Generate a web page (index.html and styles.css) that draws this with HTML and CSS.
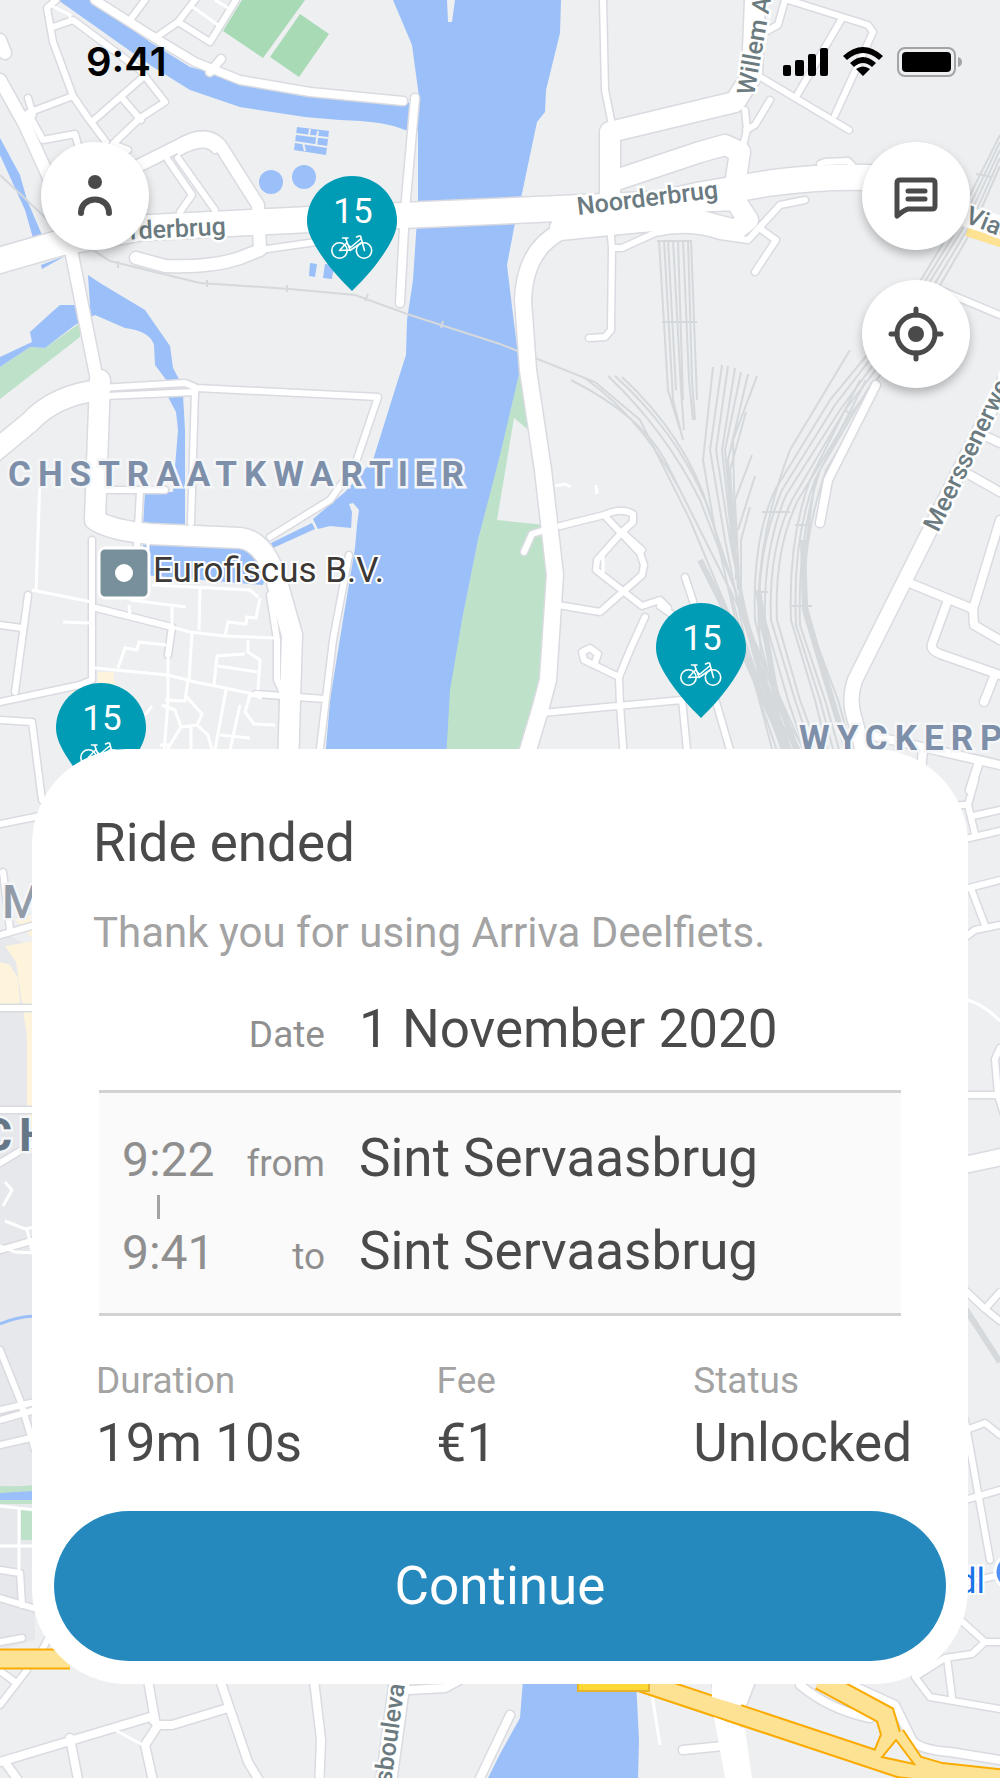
FILE: index.html
```html
<!DOCTYPE html>
<html lang="en">
<head>
<meta charset="utf-8">
<meta name="viewport" content="width=device-width, initial-scale=1">
<title>Ride ended</title>
<link rel="stylesheet" href="styles.css">
</head>
<body>
<div class="screen">
  <svg class="map" viewBox="0 0 1000 1778" preserveAspectRatio="xMidYMin slice" aria-hidden="true">
    <defs>
      <g id="roads">
        <!-- north-west streets -->
        <path class="w6" d="M56 0L47 8L53 42L73 96L88 118L106 142M53 27L73 20L140 70L165 102L140 118L113 144L128 150M73 96L28 113L43 140L75 134L82 160M28 98L33 115M94 120L142 78M122 98L141 120M130 20L145 0M155 38L178 22L210 42L236 0M178 22L195 0"/>
        <path class="w8" d="M95 0L155 38L195 62L240 80L310 92L403 101M415 98L405 210L400 303M210 72L221 59"/>
        <path class="w12" d="M0 40L5 53M0 80L25 125L50 180M70 245L98 385M140 165L180 145Q206 130 220 145L258 205L260 250L240 258Q210 268 165 266L136 258"/>
        <path class="w6" d="M180 152Q205 138 215 150M168 160L192 195L180 212M178 158L215 210M260 250L330 240"/>
        <path class="w26" d="M-10 263L60 243L140 228L300 220L660 204L700 195L770 183Q830 175 880 178"/>
        <!-- north-east streets -->
        <path class="w6" d="M603 0L605 90L612 125M785 0L778 25L765 32M788 0L868 25L873 32L835 115M841 20L796 97M762 78L849 130M770 100L755 125L746 130M820 164L825 162L848 161L852 165M745 110L747 130L742 150M610 225L612 248L611 330L605 337L589 338M612 248L622 248L655 233Q690 225 720 236L748 240L780 205L805 200M762 230L776 240L755 272M940 290L1000 315"/>
        <path class="w20" d="M755 0L752 75L735 102L610 132L610 220M610 182L700 152L725 145L740 152L735 185M690 202L735 200L748 220L735 230L690 218L560 228"/>
        <path class="w16" d="M660 222L560 232Q525 250 523 300L528 370L543 470L555 575L548 680L540 710L525 760"/>
        <path class="w6" d="M560 526L604 515Q622 507 633 514L633 522L622 532L597 560L596 570L642 606L660 600L668 608M604 515L640 553L644 565L642 575L600 612L558 605M622 532L642 550M645 617L630 650L619 677M524 552L532 534L548 529M685 577L693 601L697 620M660 606L680 620M619 677L584 660L582 652L590 648L598 654L594 665M619 677L620 705L624 760M542 713L682 700L688 760M714 695L730 750"/>
        <!-- east streets -->
        <path class="w14" d="M1010 370L925 540L855 680Q848 700 855 720L865 760"/>
        <path class="w8" d="M912 584L973 609L1000 520M948 600L932 644Q930 650 940 654L1000 675M973 609L974 625L1000 640M970 475L1000 492M985 436L1000 443M995 674L984 702M876 385L828 480L820 523M870 735L1000 765M923 750L920 780M978 765L970 790"/>
        <path class="w6" d="M975 780L968 805L975 834M960 805L968 805M973 816L1000 810M965 839L1000 831M965 889L1000 880M972 891L986 928M960 941L975 930L1000 925M965 1095L1000 1095M1000 1048L995 1059L998 1095L1010 1134M965 1290L985 1309L1000 1321M985 1309L1000 1292M965 1420L990 1560M966 1430L985 1423L1000 1435M965 1500L1000 1490M970 1582L1000 1575M955 1615L985 1642L1000 1642M985 1642L972 1654L945 1658L915 1677L930 1697L1000 1709M947 1658L952 1697"/>
        <path class="w16" d="M960 1166L1010 1155"/>
        <!-- west streets -->
        <path class="w20" d="M-10 455L30 422Q55 395 100 390M100 380L95 520Q110 530 150 534L240 538Q262 540 275 575L292 635L290 700L288 770"/>
        <path class="w6" d="M100 388L185 383L197 388L378 397L355 465L330 500L270 537M106 396L195 392L191 523M105 490L165 490M140 492L137 545M92 540L92 680L80 685L0 702M0 625L22 628M28 595L15 692M92 607L172 627L168 655M0 720L32 722L42 800M349 555L333 640L318 765M270 595L277 640L277 680L284 695M256 694L325 699M0 824L40 816M3 872L10 930M0 935L35 925M0 1008L35 1008M0 1110L35 1110M0 1163L35 1142M0 1250L35 1240M0 1350L20 1400L35 1450M0 1410L35 1402M0 1420L35 1410M0 1445L35 1437M0 1570L20 1573L22 1605M0 1598L40 1610M0 1642L22 1638M50 1635L42 1650M0 1671L15 1682M27 1670L0 1705"/>
        <!-- southern streets -->
        <path class="w8" d="M0 1762L150 1717L158 1725L145 1745L155 1790M5 1762L25 1790M70 1738L80 1790M148 1680L155 1720M158 1725L172 1725L228 1708M220 1680L248 1762L265 1790M314 1680L321 1740L319 1790M510 1715L480 1778M683 1750L723 1746M800 1685Q830 1710 870 1718M840 1680L895 1705L912 1740Q920 1750 950 1752L1000 1760M410 1690L445 1688L460 1680"/>
        <path class="w20" d="M400 1680L385 1790M722 1680L740 1790M745 1680L730 1720"/>
      </g>
      <g id="lanes">
        <path d="M32 590L92 602M40 478L36 592M63 622L90 623M129 605L130 617M130 600L186 607M200 588L199 630M172 607V625M172 627L190 632L225 636L275 638M260 598L256 618L247 617L246 624L228 622L225 636M118 668L125 648L137 650L139 642L166 645M168 655V700L162 780M192 632L189 680M95 668L168 675L195 682L225 688L258 695M248 640V652L260 660L258 690M214 685L217 656L245 654M218 666L257 672M165 700L185 701L188 680M185 695L202 714L197 725L181 727L175 710L162 705M181 727L170 745L160 765M191 727V760M197 725L208 735L212 750M226 690L215 750M250 695L245 712L254 724L275 725M240 705L230 750M220 735L250 738M250 695L262 698M160 745L170 745M152 706L145 715M555 486L565 484L571 487M596 485L597 494M603 555V575M148 540V550M152 585L250 590L258 597M652 1695L660 1745M5 1221L25 1229L35 1227M27 1229L32 1251M0 1246L15 1252L35 1253M3 1206L12 1190L5 1182M0 1506L35 1510M19 1508V1572M0 1546H35M115 1730L143 1745M50 5L70 15V22M190 5L218 25M215 0L228 8M965 999Q985 1005 1000 1021"/>
      </g>
    </defs>

    <rect class="land" width="1000" height="1778"/>
    <path class="district" d="M0 930L35 950V1640L0 1650Z"/>

    <!-- parks -->
    <path class="park" d="M520 370L533 440L548 530L555 600L543 690L525 760H440L450 680L478 540L500 450Z"/>
    <path class="land" d="M514 418L531 432L545 525L497 520Z"/>
    <path class="park" d="M0 367L30 347L45 348L80 323V337L0 399ZM0 1486Q15 1487 35 1485V1504H0ZM21 1510H35V1540H21Z"/>
    <path class="pitch" d="M223 31L242 0H305L263 58ZM300 14L329 34L299 77L270 57Z"/>
    <path class="shops" d="M71 683L88 680V700H71ZM98 672H114V690H98ZM15 919L35 914V1128H27V1037L16 962L5 946L35 941ZM0 962L10 965L18 978L20 1004L0 1005Z"/>

    <!-- rivers and canals -->
    <path class="water" d="M393 0H447L448 22L452 22L455 0H561L560 33L546 90L545 112L537 122L520 203L514 228L507 265L513 315L520 370L500 455L478 540L462 620L450 690L446 760H325L330 700L343 620L355 548L351 528L330 526L318 529L313 519L345 492L373 460L398 380L406 355L407 320L413 280L418 205V131L405 130Q385 121 340 120L305 117L240 107L190 90L150 65L58 0H90L150 42L190 67L240 80L310 92L420 104L412 45Z"/>
    <path class="water" d="M523 1680L520 1718L500 1754L488 1778H638L639 1740L636 1680ZM0 138L20 175L27 200L42 235L33 238L25 210L0 155ZM41 265L65 256L42 269ZM88 275L100 283L120 295L145 310L170 346L173 368L180 381H167L155 365L154 345Q150 331 125 328L95 315L75 325L45 348L30 347L0 367V357L32 342L30 332L52 312L60 305H90ZM167 395H183L185 430V527H143L145 492H173L178 430L176 412ZM143 538L260 542L270 560L263 585L143 575ZM271 543L312 523L315 529L273 548ZM0 1493L35 1491V1500H0Z"/>
    <path class="stream" d="M0 1324Q15 1317 35 1316"/>
    <circle class="water" cx="271" cy="182" r="12"/>
    <circle class="water" cx="304" cy="177" r="12"/>
    <path class="water" d="M297 127L329 131L326 155L294 150ZM310 263L317 264L315 277L309 276ZM325 264L334 265L332 279L323 278Z"/>
    <path class="basin-grid" d="M296 134L328 138M295 142L327 147M310 129L309 135M318 131L316 146M303 143L305 151"/>
    <path class="land" d="M349 504L353 503L359 510L357 525L355 548H350L352 512Z"/>

    <!-- railways -->
    <g class="rail">
      <path d="M0 175L50 222L110 261L200 283L290 289L355 295L410 315L500 344L595 382L640 420L690 520L740 640L800 760M118 261V268M207 280V287M287 285V292M368 294L365 301M443 321L441 328"/>
      <path d="M659 240L668 390L680 430M664 240L673 400L683 440M668 240L676 390M673 240L681 390L684 430M678 240L683 400M683 240L689 380L693 420M688 240L692 380L695 420M691 240L697 400M657 241H692M662 322H697"/>
      <path d="M571 380Q640 415 665 460L730 590L775 760M585 378Q650 425 690 510L740 610L790 760M608 376Q665 430 700 500L735 590L785 760M615 376Q675 430 705 500L742 610L800 760M622 377Q690 440 712 520L745 620L808 760"/>
      <path d="M713 367L703 460L715 530L740 640L780 760M722 365L710 450L725 540L745 640L785 760M728 366L716 450L730 540L750 640L795 760M735 368L722 450L733 550L755 660L805 760M741 372L725 450L735 560L760 680L812 760M748 374L728 460L736 570M757 376L733 440L736 580M746 412L730 470L738 590M752 455L735 500L740 600M755 476L738 530M750 507L741 540V590"/>
      <path d="M1000 135L960 215L900 315L830 400L775 490Q752 540 755 620L775 700L792 760M1000 142L962 222L902 318L835 405L782 490Q757 550 759 620L780 700L800 760M1000 150L965 225L906 320L840 410L786 495Q763 550 765 620L788 700L808 760M1000 158L970 225L910 325L845 410L792 500Q768 550 771 620L795 700L815 760M1000 166L972 230L914 330L850 415L798 500Q774 550 777 620L800 700L822 760"/>
      <path d="M860 380L810 480Q788 540 791 620L815 700L830 760M866 380L815 480Q792 540 796 625L820 700L836 760M872 382L820 470Q797 540 800 625L825 700L842 760M878 384L826 470Q802 540 805 600L830 690L848 760M815 480L804 560L808 620L838 700L855 760M850 350L790 450Q748 560 762 660L785 760M976 174L992 177M762 512H790M755 592H768M795 525H812M790 606H812M845 410L850 414"/>
      <path class="rail-wide" d="M700 560L725 610L790 760M740 600L760 670L790 760M758 590L775 690L800 760M803 540L805 610L850 760M965 1308L1000 1362"/>
    </g>

    <!-- road casings, then the road surfaces over them -->
    <use href="#roads" class="casing"/>
    <use href="#lanes" class="lane"/>
    <use href="#roads" class="surface"/>

    <!-- motorway -->
    <g class="motorway-edge"><path d="M-5 1659L70 1659M620 1675L900 1768L1010 1780M820 1680L885 1715L891 1735L880 1762M895 1735L915 1765L960 1778"/></g>
    <g class="motorway"><path d="M-5 1659L70 1659M620 1675L900 1768L1010 1780M820 1680L885 1715L891 1735L880 1762M895 1735L915 1765L960 1778"/></g>
    <path class="motorway-island" d="M896 1740L914 1764L882 1757Z"/>
    <path class="surface-fill" d="M712 1684H745L741 1706L712 1697ZM714 1717L745 1729L752 1778H725Z"/>
    <path class="bridge" d="M578 1670H649V1691H578Z"/>
    <path class="motorway" d="M968 228L1005 240"/>
    <path class="surface-fill" d="M962 206L1000 215V238L962 226Z"/>

    <!-- labels -->
    <g class="street">
      <text x="102" y="241" transform="rotate(-3 102 241)">oorderbrug</text>
      <text x="578" y="215" transform="rotate(-7 578 215)">Noorderbrug</text>
      <text x="754" y="96" transform="rotate(-80 754 96)">Willem A</text>
      <text x="964" y="222" transform="rotate(22 964 222)">Viad</text>
      <text x="938" y="533" transform="rotate(-64 938 533)">Meerssenerweg</text>
      <text x="391" y="1784" transform="rotate(-82 391 1784)">sboulevard</text>
    </g>
    <g class="area">
      <text x="8" y="486">CHSTRAATKWARTIER</text>
      <text x="799" y="750">WYCKERP</text>
      <text class="city" x="2" y="918">M</text>
      <text class="town" x="-18" y="1151">CH</text>
    </g>
    <rect class="poi" x="99" y="548" width="50" height="50" rx="6"/>
    <circle class="poi-dot" cx="124" cy="573" r="9"/>
    <text class="poi-name" x="153" y="582">Eurofiscus B.V.</text>
    <text class="shop-name" x="985" y="1593" text-anchor="end">Lidl</text>
    <circle class="shop-dot" cx="1013" cy="1572" r="18"/>
  </svg>

  <svg class="sprites" aria-hidden="true">
    <symbol id="bike-pin" viewBox="0 0 90 115">
      <path fill="#009cb5" d="M45 115C36 106 21 91 9 71C3 61 0 53 0 45A45 45 0 0 1 90 45C90 53 87 61 81 71C69 91 54 106 45 115Z"/>
      <g fill="none" stroke="#fff" stroke-width="1.6" stroke-linecap="round" stroke-linejoin="round">
        <circle cx="32.500" cy="74.500" r="7.700"/>
        <circle cx="57" cy="74.500" r="7.700"/>
        <path d="M35.500 62H41M38.500 62L43 74L32.500 74.500L40 66.500M40.500 68L43.500 71.500L53 63.500M43 74.500L54 67M49.500 61L52 60H53.500L57.500 74.500"/>
      </g>
    </symbol>
  </svg>
  <button class="pin pin-north" type="button" aria-label="15 bikes, Noorderbrug"><svg><use href="#bike-pin"/></svg><span>15</span></button>
  <button class="pin pin-east" type="button" aria-label="15 bikes, Wyckerpoort"><svg><use href="#bike-pin"/></svg><span>15</span></button>
  <button class="pin pin-west" type="button" aria-label="15 bikes, Statenkwartier"><svg><use href="#bike-pin"/></svg><span>15</span></button>

  <header class="top">
    <div class="status">
      <time class="clock">9:41</time>
      <div class="indicators">
        <svg width="46" height="30" viewBox="0 0 46 30"><rect y="18" width="8" height="11" rx="2"/><rect x="12" y="13" width="9" height="16" rx="2"/><rect x="25" y="7" width="8" height="22" rx="2"/><rect x="37" y="1" width="8" height="28" rx="2"/></svg>
        <svg width="42" height="30" viewBox="0 0 42 30"><path d="M1 9Q21-9 41 9L37 13Q21-1 5 13ZM8 16Q21 4 34 16L30 20Q21 12 12 20ZM14 22Q21 17 28 22L21 29Z"/></svg>
        <svg width="66" height="31" viewBox="0 0 66 31"><rect x="1" y="1" width="57" height="28" rx="7" fill="none" stroke="#a2a4a6" stroke-width="2"/><rect x="5" y="5" width="49" height="20" rx="4"/><path fill="#a2a4a6" d="M61 10Q65 11 65 15T61 20Z"/></svg>
      </div>
    </div>
    <nav class="controls">
      <button class="round" type="button" aria-label="Profile">
        <svg viewBox="0 0 64 64"><circle cx="32" cy="18" r="7" fill="currentColor"/><path d="M18 49C18 31 46 31 46 49" fill="none" stroke="currentColor" stroke-width="6" stroke-linecap="round"/></svg>
      </button>
      <div class="stack">
        <button class="round" type="button" aria-label="Messages">
          <svg viewBox="0 0 64 64" fill="none" stroke="currentColor" stroke-width="5" stroke-linecap="round" stroke-linejoin="round"><path d="M13 52V19Q13 16 16 16H48Q51 16 51 19V42Q51 45 48 45H24Q20 46 13 52ZM24 27H41M24 35H41"/></svg>
        </button>
        <button class="round" type="button" aria-label="My location">
          <svg viewBox="0 0 64 64" fill="none" stroke="currentColor" stroke-width="5" stroke-linecap="round"><circle cx="32" cy="32" r="19"/><circle cx="32" cy="32" r="8" fill="currentColor" stroke="none"/><path d="M32 7V13M32 51V57M7 32H13M51 32H57"/></svg>
        </button>
      </div>
    </nav>
  </header>

  <main class="card">
    <h1 class="title">Ride ended</h1>
    <p class="thanks">Thank you for using Arriva Deelfiets.</p>
    <div class="trip date">
      <span class="time"></span><span class="label">Date</span><span class="value">1 November 2020</span>
    </div>
    <div class="trip route">
      <time class="time">9:22</time><span class="label">from</span><span class="value">Sint Servaasbrug</span>
      <span class="link"></span>
      <time class="time">9:41</time><span class="label">to</span><span class="value">Sint Servaasbrug</span>
    </div>
    <dl class="stats">
      <div><dt>Duration</dt><dd>19m 10s</dd></div>
      <div><dt>Fee</dt><dd>€1</dd></div>
      <div><dt>Status</dt><dd>Unlocked</dd></div>
    </dl>
    <button class="continue" type="button">Continue</button>
  </main>
</div>
</body>
</html>
```
FILE: styles.css
```css
* { box-sizing: border-box; }

body {
  margin: 0;
  font-family: Roboto, "Liberation Sans", sans-serif;
  color: #4a4a4a;
}

button {
  border: 0;
  padding: 0;
  font: inherit;
  cursor: pointer;
}

.screen {
  position: relative;
  display: flex;
  flex-direction: column;
  min-height: 100vh;
  overflow: hidden;
}

/* Map */
.map {
  position: absolute;
  inset: 0;
  width: 100%;
  height: 100%;
}
.sprites { position: absolute; width: 0; height: 0; }

.land { fill: #edeff1; }
.district { fill: #e6e8ec; }
.park { fill: #bde2c9; }
.pitch { fill: #a8dab5; }
.shops { fill: #fdf4db; }
.water { fill: #9bbff8; }
.stream { fill: none; stroke: #9bbff8; stroke-width: 3px; }
.basin-grid { fill: none; stroke: #edeff1; stroke-width: 2px; }

.w6 { --w: 6px; }
.w8 { --w: 8px; }
.w12 { --w: 12px; }
.w14 { --w: 14px; }
.w16 { --w: 16px; }
.w20 { --w: 20px; }
.w26 { --w: 25px; }
#roads path {
  fill: none;
  stroke: var(--ink);
  stroke-width: calc(var(--w) + var(--edge));
  stroke-linejoin: round;
  stroke-linecap: round;
}
.casing { --ink: #d9dbe0; --edge: 3px; }
.surface { --ink: #fff; --edge: 0px; }
.surface-fill { fill: #fff; }
.lane { fill: none; stroke: #fff; stroke-width: 3px; }
.rail { fill: none; stroke: #d5d9dc; stroke-width: 2px; }
.rail-wide { stroke-width: 6px; }
.motorway-edge { fill: none; stroke: #f9ab00; stroke-width: 21px; }
.motorway { fill: none; stroke: #fde293; stroke-width: 17px; }
.motorway-island { fill: #edeff1; stroke: #f9ab00; stroke-width: 2px; }
.bridge { fill: #fdd835; stroke: #e5b42c; stroke-width: 2px; }

.street text {
  fill: #6b7b80;
  font-size: 25px;
  font-weight: 500;
  stroke: #fff;
  stroke-width: 5px;
  paint-order: stroke;
}
.area text {
  fill: #7d8fa9;
  font-size: 35px;
  font-weight: 700;
  letter-spacing: 7px;
  stroke: #f4f6f8;
  stroke-width: 5px;
  paint-order: stroke;
}
.area .city { fill: #929ba8; font-size: 46px; font-weight: 500; }
.area .town { fill: #667788; font-size: 46px; }
.poi { fill: #78909c; stroke: #fff; stroke-width: 3px; }
.poi-dot { fill: #fff; }
.poi-name, .shop-name {
  fill: #3c3835;
  font-size: 35px;
  stroke: #fff;
  stroke-width: 4px;
  paint-order: stroke;
}
.shop-name { fill: #1a73e8; }
.shop-dot { fill: #4f8ff7; stroke: #fff; stroke-width: 3px; }

/* Bike station pins */
.pin {
  position: absolute;
  width: 90px;
  height: 115px;
  background: none;
  color: #fff;
}
.pin svg { display: block; width: 90px; height: 115px; }
.pin span {
  position: absolute;
  inset: 16px 0 auto 2px;
  font-size: 35px;
  line-height: 40px;
  text-align: center;
}
.pin-north { left: 307px; top: 176px; }
.pin-east { left: 656px; top: 603px; }
.pin-west { left: 56px; top: 683px; }

/* Status bar and map controls */
.top { position: relative; color: #000; pointer-events: none; }
.status {
  display: flex;
  align-items: center;
  justify-content: space-between;
  height: 124px;
  padding: 0 37px 0 86px;
}
.clock { font: 600 40px/48px Inter, sans-serif; }
.indicators { display: flex; align-items: center; gap: 13px; }
.controls {
  display: flex;
  align-items: flex-start;
  justify-content: space-between;
  padding: 18px 30px 0 41px;
}
.stack { display: flex; flex-direction: column; gap: 30px; }
.round {
  display: grid;
  place-items: center;
  width: 108px;
  height: 108px;
  border-radius: 50%;
  background: #fff;
  color: #4a4a4a;
  box-shadow: 0 5px 10px rgba(0, 0, 0, .25);
  pointer-events: auto;
}
.round svg { width: 64px; height: 64px; }

/* Ride summary */
.card {
  position: relative;
  display: flex;
  flex-direction: column;
  margin: auto 32px 94px;
  padding: 62px 22px 23px;
  border-radius: 95px;
  background: #fff;
}
.title, .value, .stats dd {
  margin: 0;
  font-size: 53px;
  font-weight: 400;
  line-height: 64px;
}
.title { padding: 0 39px; }
.thanks {
  margin: 34px 0 40px;
  padding: 0 39px;
  font-size: 42px;
  line-height: 48px;
  color: #a3a3a3;
}
.trip {
  display: grid;
  grid-template-columns: 100px 103px 1fr;
  align-items: baseline;
  margin: 0 45px;
  padding: 0 0 0 23px;
  white-space: nowrap;
}
.route {
  margin-top: 29px;
  padding: 33px 0 30px 23px;
  border-block: 3px solid #d2d2d2;
  background: #fafafa;
}
.time { font-size: 48px; line-height: 56px; color: #8f8f8f; }
.label {
  font-size: 37px;
  line-height: 44px;
  color: #8f8f8f;
  text-align: right;
}
.value { padding-left: 34px; }
.link {
  grid-column: 1 / -1;
  width: 3px;
  height: 24px;
  margin: 5px 0 0 35px;
  background: #a3a3a3;
}
.stats {
  display: grid;
  grid-template-columns: 341fr 257fr 243fr;
  margin: 43px 10px 36px 42px;
  white-space: nowrap;
}
.stats dt {
  margin-bottom: 8px;
  font-size: 37px;
  line-height: 44px;
  color: #a3a3a3;
}
.continue {
  height: 150px;
  border-radius: 75px;
  background: #2589be;
  color: #fff;
  font-size: 53px;
  line-height: 64px;
}
```
